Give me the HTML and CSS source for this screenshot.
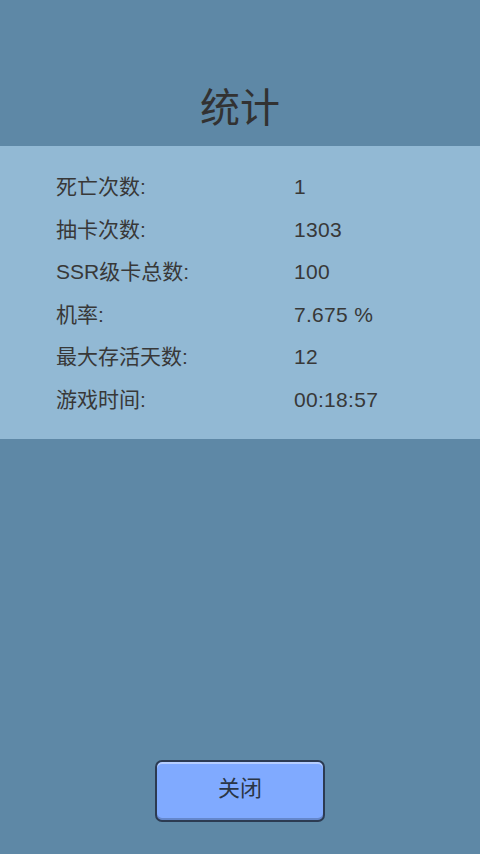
FILE: index.html
```html
<!DOCTYPE html>
<html>
<head>
  <meta charset="utf-8">
  <meta name="viewport" content="width=device-width, initial-scale=1.0">
  <link rel="stylesheet" href="styles.css">
</head>
<body>
  <div id="screen">
    <div id="title">统计</div>
    <div id="panel">
      <div class="row"><span class="label">死亡次数:</span><span class="value">1</span></div>
      <div class="row"><span class="label">抽卡次数:</span><span class="value">1303</span></div>
      <div class="row"><span class="label">SSR级卡总数:</span><span class="value">100</span></div>
      <div class="row"><span class="label">机率:</span><span class="value">7.675 %</span></div>
      <div class="row"><span class="label">最大存活天数:</span><span class="value">12</span></div>
      <div class="row"><span class="label">游戏时间:</span><span class="value">00:18:57</span></div>
    </div>
    <div id="footer">
      <button class="close">关闭</button>
    </div>
  </div>
</body>
</html>
```

FILE: styles.css
```css
html, body {
  margin: 0;
  padding: 0;
  width: 100%;
  height: 100%;
  overflow: hidden;
  background: #5e88a6;
  font-family: "Liberation Sans", "Noto Sans CJK SC", sans-serif;
  color: #383838;
}
#screen {
  height: 854px;
  display: flex;
  flex-direction: column;
}
#title {
  height: 146px;
  box-sizing: border-box;
  padding-top: 84px;
  text-align: center;
  font-size: 40px;
  line-height: 48px;
  color: #323232;
}
#panel {
  background: #92b9d4;
  height: 293px;
  box-sizing: border-box;
  padding: 20px 0 0 56px;
  font-size: 21px;
}
.row {
  display: flex;
  height: 42.5px;
  line-height: 42.5px;
}
.label {
  width: 238px;
}
.value {
  letter-spacing: 0.3px;
}
#footer {
  flex: 1;
  display: flex;
  align-items: flex-end;
  justify-content: center;
  padding-bottom: 32px;
}
.close {
  width: 170px;
  height: 62px;
  background: #80aaff;
  border: 2px solid #2c3b52;
  border-radius: 7px;
  box-shadow: inset 0 2px 0 #b6ceff, inset 0 -2px 0 #6487cc;
  font-family: "Liberation Sans", "Noto Sans CJK SC", sans-serif;
  font-size: 22px;
  line-height: 1;
  color: #2a3544;
  padding: 0 0 4px 0;
}
```
